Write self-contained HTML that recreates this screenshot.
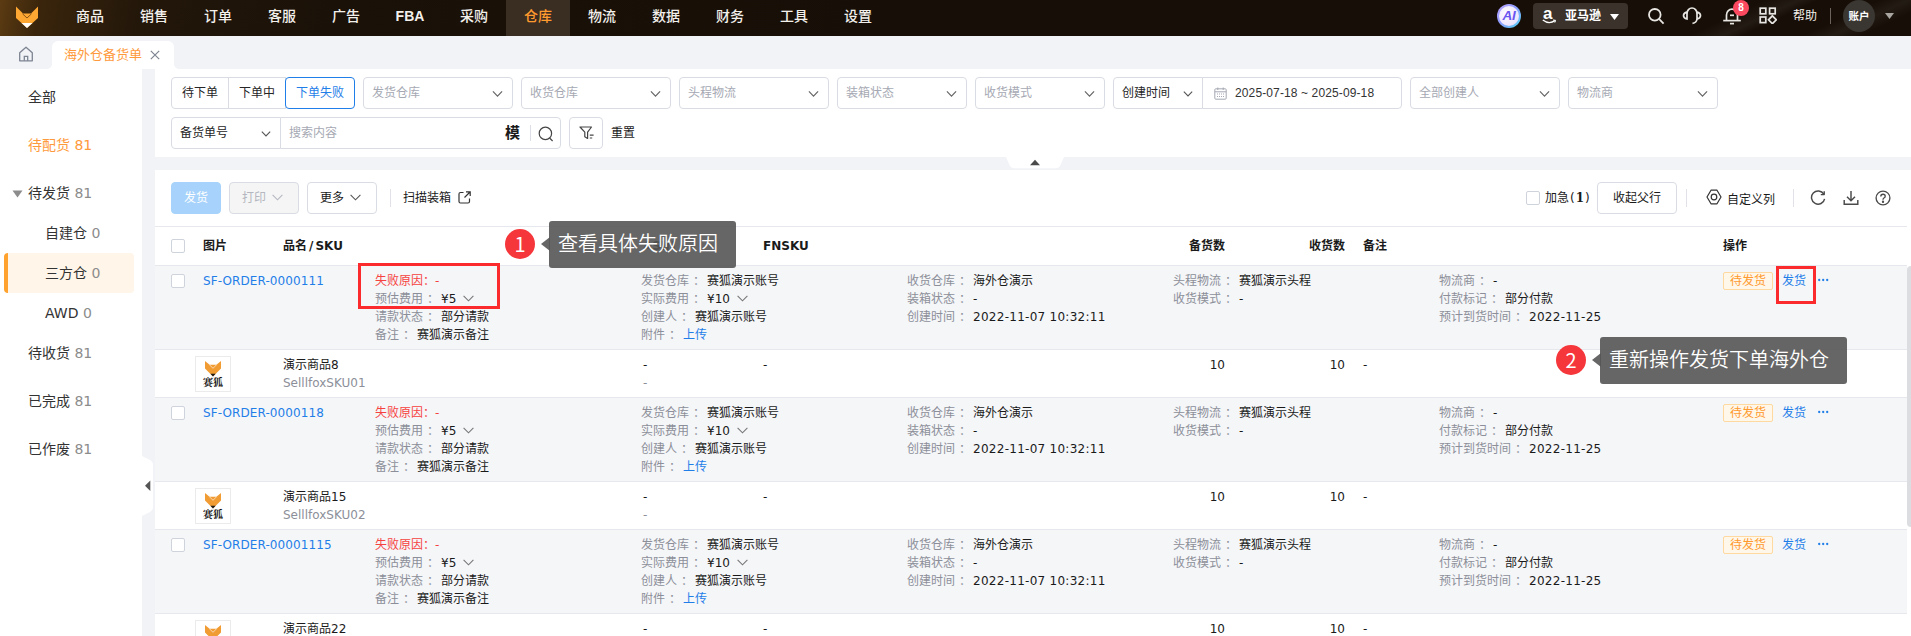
<!DOCTYPE html>
<html lang="zh-CN">
<head>
<meta charset="utf-8">
<title>海外仓备货单</title>
<style>
*{box-sizing:border-box;margin:0;padding:0}
html,body{width:1911px;height:636px;overflow:hidden;background:#f2f3f7}
body{position:relative;font-family:"DejaVu Sans","Noto Sans CJK SC",sans-serif;font-size:12px;color:#1a1a1a;line-height:1}
.abs{position:absolute}
/* ---------- top nav ---------- */
#nav{position:absolute;left:0;top:0;width:1911px;height:36px;background:#170f07;overflow:hidden}
#nav .glow{position:absolute;left:0;top:0;width:900px;height:36px;background:linear-gradient(100deg,#5b3b12 0px,#3a250c 40px,#23170a 140px,#1a1108 330px,#170f07 900px)}
#nav .streak{position:absolute;right:0;top:0;width:420px;height:36px;background:linear-gradient(155deg,rgba(255,255,255,0) 55%,rgba(255,255,255,.05) 62%,rgba(255,255,255,0) 66%,rgba(255,255,255,0) 78%,rgba(255,255,255,.05) 84%,rgba(255,255,255,0) 90%)}
#nav .item{position:absolute;top:0;width:64px;height:36px;line-height:33px;text-align:center;color:#f3f0ec;font:500 14px/33px "Liberation Sans","Noto Sans CJK SC",sans-serif}
#nav .item.on{background:#3a2d22;color:#ff9a2e}
/* ---------- tab bar ---------- */
#tabs{position:absolute;left:0;top:36px;width:1911px;height:33px;background:#f2f3f7}
#tabs .tab{position:absolute;left:52px;top:5px;width:122px;height:28px;background:#fff;border-radius:6px 6px 0 0;color:#ff9a3c;font:13px/28px "Liberation Sans","Noto Sans CJK SC",sans-serif;padding-left:12px}
/* ---------- sidebar ---------- */
#side{position:absolute;left:0;top:69px;width:142px;height:567px;background:#fff}
#side .mi{position:absolute;left:0;width:142px;height:40px;font:14px/40px "DejaVu Sans","Noto Sans CJK SC",sans-serif;color:#333;white-space:nowrap}
#side .mi i{font-style:normal;color:#8c8c8c}
#side .mi.top{padding-left:28px}
#side .mi.sub{padding-left:45px}
#side .mi.act{color:#ff9a3c}
#side .mi.act i{color:#ff9a3c}
#side .sel{position:absolute;left:4px;top:184px;width:130px;height:40px;background:#fff5e8;border-left:4px solid #ffa22e;border-radius:4px}
/* ---------- panels ---------- */
#filter{position:absolute;left:155px;top:69px;width:1756px;height:88px;background:#fff}
#main{position:absolute;left:155px;top:170px;width:1756px;height:466px;background:#fff}
#main>.in{position:absolute;left:0;top:-1px;width:1756px;height:467px}
.box{position:absolute;height:32px;border:1px solid #d9dce3;border-radius:4px;background:#fff;font:12px/30px "Liberation Sans","Noto Sans CJK SC",sans-serif;color:#262626;white-space:nowrap}
.ph{color:#a6a9b3}
.chev{position:absolute;width:12px;height:8px}

/* ---------- toolbar ---------- */
.btn{position:absolute;top:13px;height:32px;border:1px solid #d9dce3;border-radius:4px;background:#fff;font:12px/30px "Liberation Sans","Noto Sans CJK SC",sans-serif;white-space:nowrap;text-align:center}
/* ---------- table ---------- */
#thead{position:absolute;left:0;top:57px;width:1752px;height:40px;border-top:1px solid #e6e8ed;border-bottom:1px solid #e6e8ed;font:bold 12px/38px "DejaVu Sans","Noto Sans CJK SC",sans-serif;color:#1a1a1a}
#thead span{position:absolute;top:0;white-space:nowrap}
.cb{position:absolute;left:16px;width:14px;height:14px;border:1px solid #cfd3dc;border-radius:2px;background:#fff}
.orow{position:absolute;left:0;width:1752px;height:84px;background:#f5f6f8;border-bottom:1px solid #e6e8ed;font:12px/18px "DejaVu Sans","Noto Sans CJK SC",sans-serif}
.ls{letter-spacing:.27px}
.orow .c{position:absolute;top:6px;white-space:nowrap;color:#1a1a1a}
.orow .c b{font-weight:normal;color:#8c8f99;margin-right:6px;letter-spacing:0}
.orow .c b i{font-style:normal;position:relative;left:4px}
.orow .red b{margin-right:0}.orow .red b i{left:0}
.orow a{color:#1f7ee8;text-decoration:none}
.orow .red,.orow .red b{color:#f5423f}
.prow{position:absolute;left:0;width:1752px;height:48px;background:#fff;border-bottom:1px solid #e6e8ed;font:12px/18px "DejaVu Sans","Noto Sans CJK SC",sans-serif}
.prow span{position:absolute;white-space:nowrap}
.prow .g{color:#8c8f99}
.pimg{position:absolute;left:40px;top:6px;width:36px;height:36px;border:1px solid #ebebeb;background:#fff}
.tag{position:absolute;left:1568px;top:6px;width:50px;height:18px;border:1px solid #ffd9a0;background:#fff7ea;color:#ff9a2e;border-radius:2px;font:12px/16px "Liberation Sans","Noto Sans CJK SC",sans-serif;text-align:center;letter-spacing:0}
.sc{display:inline-block;width:11px;height:7px;margin-left:7px;vertical-align:1px}
.tip{position:absolute;height:47px;background:rgba(85,85,85,.9);border-radius:3px;color:#fff;font:350 20px/47px "Liberation Sans","Noto Sans CJK SC",sans-serif;padding-left:9px;white-space:nowrap}
.num{position:absolute;width:30px;height:30px;border-radius:50%;background:#f5363a;color:#fff;font:20px/29px "Noto Sans CJK SC","Liberation Sans",sans-serif;text-align:center}
.rbox{position:absolute;border:3px solid #fb2a2c}
</style>
</head>
<body>
<!-- NAV -->
<div id="nav">
  <div class="glow"></div><div class="streak"></div>
  <svg class="abs" style="left:15px;top:5px" width="24" height="24" viewBox="0 0 24 24">
    <path d="M1 1.5 L8 8.5 H16 L23 1.5 V13 L12 23 L1 13 Z" fill="#ffa733"/>
    <path d="M6.5 18 H17.5 L12 23 Z" fill="#fff"/>
    <path d="M7.5 8.8 L12 13 L16.5 8.8" fill="none" stroke="#7a4a10" stroke-width="0.9"/>
  </svg>
  <div class="item" style="left:58px">商品</div>
  <div class="item" style="left:122px">销售</div>
  <div class="item" style="left:186px">订单</div>
  <div class="item" style="left:250px">客服</div>
  <div class="item" style="left:314px">广告</div>
  <div class="item" style="left:378px;font-weight:bold">FBA</div>
  <div class="item" style="left:442px">采购</div>
  <div class="item on" style="left:506px">仓库</div>
  <div class="item" style="left:570px">物流</div>
  <div class="item" style="left:634px">数据</div>
  <div class="item" style="left:698px">财务</div>
  <div class="item" style="left:762px">工具</div>
  <div class="item" style="left:826px">设置</div>
  <!-- right tools -->
  <div class="abs" style="left:1497px;top:4px;width:24px;height:24px;border-radius:50%;background:linear-gradient(135deg,#b9a2ff 0%,#8f9bff 45%,#4fd6f5 100%)"></div>
  <div class="abs" style="left:1499px;top:6px;width:20px;height:20px;border-radius:50%;background:radial-gradient(circle at 40% 40%,#ffffff 0%,#efe8ff 60%,#dcd3ff 100%);color:#6a55f0;font:italic bold 13.500px/20px 'Liberation Sans',sans-serif;text-align:center;letter-spacing:-.3px">AI</div>
  <div class="abs" style="left:1533px;top:3px;width:95px;height:26px;border-radius:4px;background:#3b332b"></div>
  <span class="abs" style="left:1543px;top:3px;color:#fff;font:bold 17px/22px 'Liberation Sans',sans-serif">a</span>
  <svg class="abs" style="left:1542px;top:19px" width="15" height="6" viewBox="0 0 15 6" fill="none" stroke="#fff" stroke-width="1.300"><path d="M0.800 1 Q7 5.800 13 1.600"/><path d="M11 1 L13.600 1.300 L12.800 3.600" stroke-width="1"/></svg>
  <div class="abs" style="left:1565px;top:3px;color:#fff;font:bold 12px/26px 'Liberation Sans','Noto Sans CJK SC',sans-serif">亚马逊</div>
  <svg class="abs" style="left:1610px;top:14px" width="9" height="6" viewBox="0 0 9 6"><path d="M0 0 H9 L4.500 6 Z" fill="#fff"/></svg>
  <svg class="abs" style="left:1647px;top:7px" width="18" height="18" viewBox="0 0 18 18" fill="none" stroke="#e8e6e3" stroke-width="1.800"><circle cx="7.800" cy="7.800" r="5.800"/><path d="M12.200 12.200 L16.600 16.600"/></svg>
  <svg class="abs" style="left:1682px;top:7px" width="20" height="18" viewBox="0 0 20 18" fill="none" stroke="#e8e6e3" stroke-width="1.700"><path d="M5 6.500 A5 5.500 0 0 1 15 6.500"/><path d="M5 5.200 Q1.500 5.800 1.500 8.600 Q1.500 11.400 5 12 Z"/><path d="M15 5.200 Q18.500 5.800 18.500 8.600 Q18.500 11.400 15 12 V5.200"/><path d="M15 12 Q14.500 16 10.500 16.300"/></svg>
  <svg class="abs" style="left:1722px;top:8px" width="20" height="17" viewBox="0 0 20 17" fill="none" stroke="#e8e6e3" stroke-width="1.700"><path d="M4.500 12 V7 A5.500 5.800 0 0 1 15.500 7 V12"/><path d="M1.200 12.600 H18.800"/><path d="M8 15.600 H12"/><path d="M8 7.300 H12"/></svg>
  <div class="abs" style="left:1733px;top:0;width:16px;height:16px;border-radius:50%;background:#fd4960;color:#fff;font:bold 10px/16px 'Liberation Sans',sans-serif;text-align:center">8</div>
  <svg class="abs" style="left:1759px;top:7px" width="18" height="17" viewBox="0 0 18 17" fill="none" stroke="#e8e6e3" stroke-width="1.700"><rect x="1.200" y="1.200" width="5.600" height="5.600"/><rect x="10.600" y="1.200" width="5.600" height="5.600"/><rect x="1.200" y="10" width="5.600" height="5.600"/><path d="M13.400 8.800 L17.300 12.800 L13.400 16.700 L9.500 12.800 Z"/></svg>
  <div class="abs" style="left:1793px;top:0;color:#f3f0ec;font:12px/32px 'Liberation Sans','Noto Sans CJK SC',sans-serif">帮助</div>
  <div class="abs" style="left:1830px;top:8px;width:1px;height:16px;background:#6b645c"></div>
  <div class="abs" style="left:1843px;top:0;width:32px;height:32px;border-radius:50%;background:#3a3631;color:#fff;font:bold 10.500px/33px 'Liberation Sans','Noto Sans CJK SC',sans-serif;text-align:center">账户</div>
  <svg class="abs" style="left:1885px;top:13px" width="9" height="6" viewBox="0 0 9 6"><path d="M0 0 H9 L4.500 6 Z" fill="#a9a6a2"/></svg>
</div>
<!-- TABS -->
<div id="tabs">
  <svg class="abs" style="left:18px;top:10px" width="16" height="16" viewBox="0 0 16 16" fill="none" stroke="#7d8492" stroke-width="1.3">
    <path d="M1.7 6.8 L8 1.2 L14.3 6.8 V14.8 H1.7 Z" stroke-linejoin="round"/><path d="M6.3 14.8 V10.3 H9.7 V14.8"/>
  </svg>
  <div class="tab">海外仓备货单</div>
  <div class="abs" style="left:47px;top:28px;width:5px;height:5px;background:radial-gradient(circle at 0 0,#f2f3f7 4.6px,#fff 5.2px)"></div>
  <div class="abs" style="left:174px;top:28px;width:5px;height:5px;background:radial-gradient(circle at 100% 0,#f2f3f7 4.6px,#fff 5.2px)"></div>
  <svg class="abs" style="left:150px;top:14px" width="10" height="10" viewBox="0 0 10 10" stroke="#7d8492" stroke-width="1.2"><path d="M0.8 0.8 L9.2 9.2 M9.2 0.8 L0.8 9.2"/></svg>
</div>
<!-- SIDEBAR -->
<div id="side">
  <div class="sel"></div>
  <div class="mi top" style="top:8px">全部</div>
  <div class="mi top act" style="top:56px">待配货 <i>81</i></div>
  <div class="mi top" style="top:104px">待发货 <i>81</i></div>
  <div class="mi sub" style="top:144px">自建仓 <i>0</i></div>
  <div class="mi sub" style="top:184px">三方仓 <i>0</i></div>
  <div class="mi sub" style="top:224px">AWD <i>0</i></div>
  <div class="mi top" style="top:264px">待收货 <i>81</i></div>
  <div class="mi top" style="top:312px">已完成 <i>81</i></div>
  <div class="mi top" style="top:360px">已作废 <i>81</i></div>
  <svg class="abs" style="left:12px;top:121px" width="11" height="8" viewBox="0 0 11 8"><path d="M0.5 0.5 H10.5 L5.5 7.5 Z" fill="#8c8c8c"/></svg>
</div>
<!-- collapse handle -->
<svg class="abs" style="left:142px;top:456px" width="12" height="60" viewBox="0 0 12 60"><path d="M0 0 L8 4 Q11 5.5 11 9 V51 Q11 54.5 8 56 L0 60 Z" fill="#fff"/><path d="M8.3 24.5 V35 L3 29.8 Z" fill="#555"/></svg>
<!-- FILTER -->
<div id="filter">
  <!-- row 1 (coords relative to panel: left=155, top=69) -->
  <div class="box" style="left:16px;top:8px;width:58px;border-radius:4px 0 0 4px;text-align:center">待下单</div>
  <div class="box" style="left:73px;top:8px;width:58px;border-radius:0;text-align:center">下单中</div>
  <div class="box" style="left:130px;top:8px;width:70px;border-color:#1f7ee8;color:#1f7ee8;text-align:center">下单失败</div>
  <div class="box ph" style="left:208px;top:8px;width:150px;padding-left:8px">发货仓库<svg class="chev" style="right:9px;top:12px;width:11px" viewBox="0 0 12 8" fill="none" stroke="#666" stroke-width="1.3"><path d="M1 1.2 L6 6.4 L11 1.2"/></svg></div>
  <div class="box ph" style="left:366px;top:8px;width:150px;padding-left:8px">收货仓库<svg class="chev" style="right:9px;top:12px;width:11px" viewBox="0 0 12 8" fill="none" stroke="#666" stroke-width="1.3"><path d="M1 1.2 L6 6.4 L11 1.2"/></svg></div>
  <div class="box ph" style="left:524px;top:8px;width:150px;padding-left:8px">头程物流<svg class="chev" style="right:9px;top:12px;width:11px" viewBox="0 0 12 8" fill="none" stroke="#666" stroke-width="1.3"><path d="M1 1.2 L6 6.4 L11 1.2"/></svg></div>
  <div class="box ph" style="left:682px;top:8px;width:130px;padding-left:8px">装箱状态<svg class="chev" style="right:9px;top:12px;width:11px" viewBox="0 0 12 8" fill="none" stroke="#666" stroke-width="1.3"><path d="M1 1.2 L6 6.4 L11 1.2"/></svg></div>
  <div class="box ph" style="left:820px;top:8px;width:130px;padding-left:8px">收货模式<svg class="chev" style="right:9px;top:12px;width:11px" viewBox="0 0 12 8" fill="none" stroke="#666" stroke-width="1.3"><path d="M1 1.2 L6 6.4 L11 1.2"/></svg></div>
  <div class="box" style="left:958px;top:8px;width:90px;padding-left:8px;border-radius:4px 0 0 4px">创建时间<svg class="chev" style="right:9px;top:12px;width:10px" viewBox="0 0 12 8" fill="none" stroke="#555" stroke-width="1.3"><path d="M1 1.2 L6 6.4 L11 1.2"/></svg></div>
  <div class="box" style="left:1047px;top:8px;width:200px;padding-left:32px;border-radius:0 4px 4px 0;color:#333;letter-spacing:.12px">2025-07-18 ~ 2025-09-18
    <svg class="abs" style="left:11px;top:9px" width="13" height="13" viewBox="0 0 13 13" fill="none" stroke="#a6a9b3" stroke-width="1"><rect x="0.8" y="1.8" width="11.4" height="10.4" rx="1"/><path d="M0.8 4.8 H12.2 M3.8 0.5 V3 M9.2 0.5 V3"/><path d="M3 7 H10 M3 9.5 H10" stroke-dasharray="1 1"/></svg></div>
  <div class="box ph" style="left:1255px;top:8px;width:150px;padding-left:8px">全部创建人<svg class="chev" style="right:9px;top:12px;width:11px" viewBox="0 0 12 8" fill="none" stroke="#666" stroke-width="1.3"><path d="M1 1.2 L6 6.4 L11 1.2"/></svg></div>
  <div class="box ph" style="left:1413px;top:8px;width:150px;padding-left:8px">物流商<svg class="chev" style="right:9px;top:12px;width:11px" viewBox="0 0 12 8" fill="none" stroke="#666" stroke-width="1.3"><path d="M1 1.2 L6 6.4 L11 1.2"/></svg></div>
  <!-- row 2 -->
  <div class="box" style="left:16px;top:48px;width:110px;padding-left:8px;border-radius:4px 0 0 4px">备货单号<svg class="chev" style="right:9px;top:12px;width:10px" viewBox="0 0 12 8" fill="none" stroke="#555" stroke-width="1.3"><path d="M1 1.2 L6 6.4 L11 1.2"/></svg></div>
  <div class="box ph" style="left:125px;top:48px;width:281px;padding-left:8px;border-radius:0 4px 4px 0">搜索内容
    <span class="abs" style="left:224px;top:0;color:#1a1a1a;font:bold 15px/30px 'Liberation Sans','Noto Sans CJK SC',sans-serif">模</span>
    <span class="abs" style="left:249px;top:7px;width:1px;height:16px;background:#dcdfe6"></span>
    <svg class="abs" style="left:257px;top:8px" width="16" height="16" viewBox="0 0 16 16" fill="none" stroke="#444" stroke-width="1.2"><circle cx="7.4" cy="7.4" r="6.2"/><path d="M11.6 12 L14.6 15"/></svg>
  </div>
  <div class="box" style="left:414px;top:48px;width:34px">
    <svg class="abs" style="left:9px;top:8px" width="16" height="15" viewBox="0 0 16 15" fill="none" stroke="#444" stroke-width="1.2"><path d="M1 1 H12.5 L8.6 6.2 V12.4 L5.8 10.8 V6.2 Z" stroke-linejoin="round"/><path d="M10.8 9.2 H14.6 M10.8 12 H13.2"/></svg>
  </div>
  <div class="abs" style="left:456px;top:48px;font:12px/32px 'Liberation Sans','Noto Sans CJK SC',sans-serif;color:#1a1a1a">重置</div>
</div>
<!-- collapse tab between panels -->
<svg class="abs" style="left:1006px;top:157px" width="58" height="12" viewBox="0 0 58 12"><path d="M0 0 H58 L54.500 8 Q53 11.200 49.500 11.200 H8.500 Q5 11.200 3.500 8 Z" fill="#fff"/><path d="M24 8.200 H34 L29 2.800 Z" fill="#4a4a4a"/></svg>
<!-- MAIN -->
<div id="main"><div class="in">
  <!-- toolbar (coords relative to panel: left=155, top=169) -->
  <div class="btn" style="left:16px;width:50px;background:#a6d2fb;border-color:#a6d2fb;color:#fff">发货</div>
  <div class="btn" style="left:74px;width:70px;background:#f5f5f6;color:#b4b7bf;text-align:left;padding-left:12px">打印<svg class="sc" style="margin-left:6px" viewBox="0 0 11 7" fill="none" stroke="#b4b7bf" stroke-width="1.1"><path d="M0.6 0.8 L5.5 5.8 L10.4 0.8"/></svg></div>
  <div class="btn" style="left:152px;width:70px;color:#1a1a1a;text-align:left;padding-left:12px">更多<svg class="sc" style="margin-left:6px" viewBox="0 0 11 7" fill="none" stroke="#555" stroke-width="1.1"><path d="M0.6 0.8 L5.5 5.8 L10.4 0.8"/></svg></div>
  <div class="abs" style="left:235px;top:20px;width:1px;height:18px;background:#e0e2e8"></div>
  <div class="abs" style="left:248px;top:13px;font:12px/32px 'Liberation Sans','Noto Sans CJK SC',sans-serif;color:#1a1a1a">扫描装箱</div>
  <svg class="abs" style="left:303px;top:22px" width="13" height="13" viewBox="0 0 13 13" fill="none" stroke="#333" stroke-width="1.2"><path d="M5.500 1.500 H2.500 Q1 1.500 1 3 V10.500 Q1 12 2.500 12 H10 Q11.500 12 11.500 10.500 V7.500"/><path d="M8 0.800 H12.200 V5 M12 1 L6.500 6.500"/></svg>
  <!-- right tools -->
  <div class="cb" style="left:1371px;top:22px"></div>
  <div class="abs" style="left:1390px;top:13px;font:12px/32px 'DejaVu Sans','Noto Sans CJK SC',sans-serif;color:#1a1a1a">加急<span style="margin:0 1px">(</span><b style="font-family:'DejaVu Serif',serif">1</b><span style="margin-left:1px">)</span></div>
  <div class="btn" style="left:1442px;width:80px;color:#1a1a1a">收起父行</div>
  <div class="abs" style="left:1531px;top:20px;width:1px;height:18px;background:#e0e2e8"></div>
  <svg class="abs" style="left:1551px;top:20px" width="16" height="16" viewBox="0 0 16 16" fill="none" stroke="#333" stroke-width="1.2"><path d="M5 1.200 H11 L15 8 L11 14.800 H5 L1 8 Z" stroke-linejoin="round"/><circle cx="8" cy="8" r="2.800"/></svg>
  <div class="abs" style="left:1572px;top:15px;font:12px/32px 'Liberation Sans','Noto Sans CJK SC',sans-serif;color:#1a1a1a">自定义列</div>
  <div class="abs" style="left:1638px;top:20px;width:1px;height:18px;background:#e0e2e8"></div>
  <svg class="abs" style="left:1655px;top:21px" width="16" height="16" viewBox="0 0 16 16" fill="none" stroke="#4a4a4a" stroke-width="1.450"><path d="M13.800 4.200 A6.600 6.600 0 1 0 14.600 8.800"/><path d="M14.200 1.200 V4.600 H10.800" stroke-linejoin="round"/></svg>
  <svg class="abs" style="left:1688px;top:21px" width="16" height="16" viewBox="0 0 16 16" fill="none" stroke="#4a4a4a" stroke-width="1.450"><path d="M8 1 V10.500 M4 6.800 L8 10.800 L12 6.800"/><path d="M1.200 10 V14.300 H14.800 V10"/></svg>
  <svg class="abs" style="left:1720px;top:21px" width="16" height="16" viewBox="0 0 16 16" fill="none" stroke="#4a4a4a" stroke-width="1.350"><circle cx="8" cy="8" r="6.900"/><path d="M5.800 6.400 Q5.800 4.200 8 4.200 Q10.200 4.200 10.200 6.200 Q10.200 7.400 8.900 8 Q8 8.500 8 9.700"/><circle cx="8" cy="11.700" r="0.500" fill="#333"/></svg>
  <!-- table -->
  <div id="thead">
    <div class="cb" style="top:12px"></div>
    <span style="left:48px">图片</span><span style="left:128px">品名<em style="font-style:normal;margin:0 2px">/</em>SKU</span><span style="left:488px">ASIN</span><span style="left:608px">FNSKU</span>
    <span style="left:970px;width:100px;text-align:right">备货数</span><span style="left:1090px;width:100px;text-align:right">收货数</span><span style="left:1208px">备注</span><span style="left:1568px">操作</span>
  </div>
  <div class="orow" style="top:97px">
    <div class="cb" style="top:8px"></div>
    <div class="c" style="left:48px"><a style="letter-spacing:.1px">SF-ORDER-0000111</a></div>
    <div class="c" style="left:220px"><span class="red"><b>失败原因<i>：</i></b>-</span><br><b>预估费用<i>：</i></b>¥5<svg class="sc" viewBox="0 0 11 7" fill="none" stroke="#777" stroke-width="1.1"><path d="M0.6 0.8 L5.5 5.8 L10.4 0.8"/></svg><br><b>请款状态<i>：</i></b>部分请款<br><b>备注<i>：</i></b>赛狐演示备注</div>
    <div class="c" style="left:486px"><b>发货仓库<i>：</i></b>赛狐演示账号<br><b>实际费用<i>：</i></b>¥10<svg class="sc" viewBox="0 0 11 7" fill="none" stroke="#777" stroke-width="1.1"><path d="M0.6 0.8 L5.5 5.8 L10.4 0.8"/></svg><br><b>创建人<i>：</i></b>赛狐演示账号<br><b>附件<i>：</i></b><a>上传</a></div>
    <div class="c" style="left:752px"><b>收货仓库<i>：</i></b>海外仓演示<br><b>装箱状态<i>：</i></b>-<br><b>创建时间<i>：</i></b><span class="ls">2022-11-07 10:32:11</span></div>
    <div class="c" style="left:1018px"><b>头程物流<i>：</i></b>赛狐演示头程<br><b>收货模式<i>：</i></b>-</div>
    <div class="c" style="left:1284px"><b>物流商<i>：</i></b>-<br><b>付款标记<i>：</i></b>部分付款<br><b>预计到货时间<i>：</i></b><span class="ls">2022-11-25</span></div>
    <div class="tag">待发货</div>
    <div class="c" style="left:1627px"><a>发货</a></div>
    <svg class="abs" style="left:1662px;top:12px" width="13" height="4" viewBox="0 0 13 4" fill="#1f7ee8"><title>···</title><circle cx="2.200" cy="2" r="1.150"/><circle cx="6.200" cy="2" r="1.150"/><circle cx="10.200" cy="2" r="1.150"/></svg>
  </div>
  <div class="prow" style="top:181px">
    <div class="pimg"><svg class="abs" style="left:9px;top:4px" width="16" height="16" viewBox="0 0 16 16"><path d="M0 0 L4.600 3.700 H11.400 L16 0 V7.500 L8 15.400 L0 7.500 Z" fill="#f19b33"/><path d="M4.600 3.900 L8 7.300 L11.400 3.900" fill="none" stroke="#fff" stroke-width="0.600"/><path d="M5.400 12.800 H10.600 L8 15.400 Z" fill="#1a1a1a"/></svg><span style="left:0;top:20px;width:34px;text-align:center;font:bold 10px/12px 'Liberation Serif','Noto Serif CJK SC',serif;color:#111">赛狐</span></div>
    <span style="left:128px;top:6px">演示商品8</span><span class="g" style="left:128px;top:24px">SelllfoxSKU01</span>
    <span style="left:488px;top:6px">-</span><span class="g" style="left:488px;top:24px">-</span>
    <span style="left:608px;top:6px">-</span>
    <span style="left:970px;top:6px;width:100px;text-align:right">10</span>
    <span style="left:1090px;top:6px;width:100px;text-align:right">10</span>
    <span style="left:1208px;top:6px">-</span>
  </div>
  <div class="orow" style="top:229px">
    <div class="cb" style="top:8px"></div>
    <div class="c" style="left:48px"><a style="letter-spacing:.1px">SF-ORDER-0000118</a></div>
    <div class="c" style="left:220px"><span class="red"><b>失败原因<i>：</i></b>-</span><br><b>预估费用<i>：</i></b>¥5<svg class="sc" viewBox="0 0 11 7" fill="none" stroke="#777" stroke-width="1.1"><path d="M0.6 0.8 L5.5 5.8 L10.4 0.8"/></svg><br><b>请款状态<i>：</i></b>部分请款<br><b>备注<i>：</i></b>赛狐演示备注</div>
    <div class="c" style="left:486px"><b>发货仓库<i>：</i></b>赛狐演示账号<br><b>实际费用<i>：</i></b>¥10<svg class="sc" viewBox="0 0 11 7" fill="none" stroke="#777" stroke-width="1.1"><path d="M0.6 0.8 L5.5 5.8 L10.4 0.8"/></svg><br><b>创建人<i>：</i></b>赛狐演示账号<br><b>附件<i>：</i></b><a>上传</a></div>
    <div class="c" style="left:752px"><b>收货仓库<i>：</i></b>海外仓演示<br><b>装箱状态<i>：</i></b>-<br><b>创建时间<i>：</i></b><span class="ls">2022-11-07 10:32:11</span></div>
    <div class="c" style="left:1018px"><b>头程物流<i>：</i></b>赛狐演示头程<br><b>收货模式<i>：</i></b>-</div>
    <div class="c" style="left:1284px"><b>物流商<i>：</i></b>-<br><b>付款标记<i>：</i></b>部分付款<br><b>预计到货时间<i>：</i></b><span class="ls">2022-11-25</span></div>
    <div class="tag">待发货</div>
    <div class="c" style="left:1627px"><a>发货</a></div>
    <svg class="abs" style="left:1662px;top:12px" width="13" height="4" viewBox="0 0 13 4" fill="#1f7ee8"><title>···</title><circle cx="2.200" cy="2" r="1.150"/><circle cx="6.200" cy="2" r="1.150"/><circle cx="10.200" cy="2" r="1.150"/></svg>
  </div>
  <div class="prow" style="top:313px">
    <div class="pimg"><svg class="abs" style="left:9px;top:4px" width="16" height="16" viewBox="0 0 16 16"><path d="M0 0 L4.600 3.700 H11.400 L16 0 V7.500 L8 15.400 L0 7.500 Z" fill="#f19b33"/><path d="M4.600 3.900 L8 7.300 L11.400 3.900" fill="none" stroke="#fff" stroke-width="0.600"/><path d="M5.400 12.800 H10.600 L8 15.400 Z" fill="#1a1a1a"/></svg><span style="left:0;top:20px;width:34px;text-align:center;font:bold 10px/12px 'Liberation Serif','Noto Serif CJK SC',serif;color:#111">赛狐</span></div>
    <span style="left:128px;top:6px">演示商品15</span><span class="g" style="left:128px;top:24px">SelllfoxSKU02</span>
    <span style="left:488px;top:6px">-</span><span class="g" style="left:488px;top:24px">-</span>
    <span style="left:608px;top:6px">-</span>
    <span style="left:970px;top:6px;width:100px;text-align:right">10</span>
    <span style="left:1090px;top:6px;width:100px;text-align:right">10</span>
    <span style="left:1208px;top:6px">-</span>
  </div>
  <div class="orow" style="top:361px">
    <div class="cb" style="top:8px"></div>
    <div class="c" style="left:48px"><a style="letter-spacing:.1px">SF-ORDER-00001115</a></div>
    <div class="c" style="left:220px"><span class="red"><b>失败原因<i>：</i></b>-</span><br><b>预估费用<i>：</i></b>¥5<svg class="sc" viewBox="0 0 11 7" fill="none" stroke="#777" stroke-width="1.1"><path d="M0.6 0.8 L5.5 5.8 L10.4 0.8"/></svg><br><b>请款状态<i>：</i></b>部分请款<br><b>备注<i>：</i></b>赛狐演示备注</div>
    <div class="c" style="left:486px"><b>发货仓库<i>：</i></b>赛狐演示账号<br><b>实际费用<i>：</i></b>¥10<svg class="sc" viewBox="0 0 11 7" fill="none" stroke="#777" stroke-width="1.1"><path d="M0.6 0.8 L5.5 5.8 L10.4 0.8"/></svg><br><b>创建人<i>：</i></b>赛狐演示账号<br><b>附件<i>：</i></b><a>上传</a></div>
    <div class="c" style="left:752px"><b>收货仓库<i>：</i></b>海外仓演示<br><b>装箱状态<i>：</i></b>-<br><b>创建时间<i>：</i></b><span class="ls">2022-11-07 10:32:11</span></div>
    <div class="c" style="left:1018px"><b>头程物流<i>：</i></b>赛狐演示头程<br><b>收货模式<i>：</i></b>-</div>
    <div class="c" style="left:1284px"><b>物流商<i>：</i></b>-<br><b>付款标记<i>：</i></b>部分付款<br><b>预计到货时间<i>：</i></b><span class="ls">2022-11-25</span></div>
    <div class="tag">待发货</div>
    <div class="c" style="left:1627px"><a>发货</a></div>
    <svg class="abs" style="left:1662px;top:12px" width="13" height="4" viewBox="0 0 13 4" fill="#1f7ee8"><title>···</title><circle cx="2.200" cy="2" r="1.150"/><circle cx="6.200" cy="2" r="1.150"/><circle cx="10.200" cy="2" r="1.150"/></svg>
  </div>
  <div class="prow" style="top:445px">
    <div class="pimg"><svg class="abs" style="left:9px;top:4px" width="16" height="16" viewBox="0 0 16 16"><path d="M0 0 L4.600 3.700 H11.400 L16 0 V7.500 L8 15.400 L0 7.500 Z" fill="#f19b33"/><path d="M4.600 3.900 L8 7.300 L11.400 3.900" fill="none" stroke="#fff" stroke-width="0.600"/><path d="M5.400 12.800 H10.600 L8 15.400 Z" fill="#1a1a1a"/></svg><span style="left:0;top:20px;width:34px;text-align:center;font:bold 10px/12px 'Liberation Serif','Noto Serif CJK SC',serif;color:#111">赛狐</span></div>
    <span style="left:128px;top:6px">演示商品22</span><span class="g" style="left:128px;top:24px">SelllfoxSKU03</span>
    <span style="left:488px;top:6px">-</span><span class="g" style="left:488px;top:24px">-</span>
    <span style="left:608px;top:6px">-</span>
    <span style="left:970px;top:6px;width:100px;text-align:right">10</span>
    <span style="left:1090px;top:6px;width:100px;text-align:right">10</span>
    <span style="left:1208px;top:6px">-</span>
  </div>
  <!-- scrollbar -->
  <div class="abs" style="left:1752px;top:57px;width:4px;height:410px;background:#fff"></div>
  <div class="abs" style="left:1752px;top:97px;width:8px;height:261px;background:#dcdde1;border-radius:4px"></div>
</div></div>
<!-- annotations -->
<div class="rbox" style="left:358px;top:263px;width:142px;height:46px"></div>
<div class="num" style="left:505px;top:229px">1</div>
<svg class="abs" style="left:541px;top:237px" width="9" height="14" viewBox="0 0 9 14"><path d="M9 0 V14 L0 7 Z" fill="rgba(85,85,85,.9)"/></svg>
<div class="tip" style="left:549px;top:221px;width:187px">查看具体失败原因</div>
<div class="rbox" style="left:1776px;top:266px;width:40px;height:38px"></div>
<div class="num" style="left:1556px;top:345px">2</div>
<svg class="abs" style="left:1592px;top:353px" width="9" height="14" viewBox="0 0 9 14"><path d="M9 0 V14 L0 7 Z" fill="rgba(85,85,85,.9)"/></svg>
<div class="tip" style="left:1600px;top:337px;width:247px">重新操作发货下单海外仓</div>
</body>
</html>
